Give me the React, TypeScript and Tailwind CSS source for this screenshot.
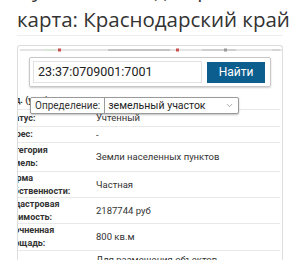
import { ChevronDown } from "lucide-react";

interface Row {
  label: string[];
  value: string;
  h: string;
  top?: boolean;
}

const rows: Row[] = [
  { label: ["Кад. (усл.) номер:"], value: "", h: "h-[17px]" },
  { label: ["Статус:"], value: "Учтенный", h: "h-[17px]" },
  { label: ["Адрес:"], value: "-", h: "h-[16px]" },
  { label: ["Категория", "земель:"], value: "Земли населенных пунктов", h: "h-[29px]" },
  { label: ["Форма", "собственности:"], value: "Частная", h: "h-[26px]" },
  { label: ["Кадастровая", "стоимость:"], value: "2187744 руб", h: "h-[26px]" },
  { label: ["Уточненная", "площадь:"], value: "800 кв.м", h: "h-[27px]" },
  { label: ["Разрешенное", "использование:"], value: "Для размещения объектов", h: "h-[30px]", top: true },
];

function MapStrip() {
  return (
    <svg width="262" height="4" viewBox="0 0 262 4" className="block">
      <rect x="0" y="1" width="262" height="2" fill="#e4e4e4" />
      <rect x="26" y="1" width="10" height="2" fill="#d9e8d6" />
      <rect x="38" y="0.5" width="3" height="3" fill="#c8504f" />
      <rect x="88" y="1" width="62" height="2" fill="#c4c4c4" />
      <rect x="156" y="0.5" width="3" height="3" fill="#c8504f" />
      <rect x="182" y="1" width="34" height="2" fill="#cfcfcf" />
      <rect x="204" y="0.5" width="3" height="3" fill="#9a9a9a" />
      <rect x="252" y="1" width="8" height="2" fill="#d6d6d6" />
    </svg>
  );
}

export default function App() {
  return (
    <div className="w-[300px] h-[260px] overflow-hidden bg-white text-[#333] font-['Roboto',sans-serif]">
      <div className="px-[17px]">
        <h1 className="-mt-[26px] font-['Open_Sans',sans-serif] text-[20.5px] leading-[30px] text-[#333] whitespace-nowrap">
          Публичная кадастровая
          <br />
          карта: Краснодарский край
        </h1>
        <div className="mt-[1px] border-t border-[#eeeeee]" />

        <div className="relative mt-[9px] rounded-t-[3px] border border-b-0 border-[#dddddd] overflow-hidden">
          <div className="px-[2px] pt-[2px]">
            <MapStrip />
          </div>

          <div className="mx-[11px] mt-[5px] flex items-center gap-[5px] rounded-[2px] border border-[#c8c8c8] p-[3px] shadow-[0_1px_2px_rgba(0,0,0,0.2)]">
            <div className="flex h-[22px] w-[169px] items-center border border-[#e2e2e2] pl-[4px] text-[12.5px] text-[#222]">
              23:37:0709001:7001
            </div>
            <button className="flex h-[21px] w-[58px] items-center justify-center bg-[#0b5e8e] text-[12px] text-white">
              Найти
            </button>
          </div>

          <div className="-ml-[14px] mr-[2px] mt-[5px]">
            {rows.map((row, i) => (
              <div
                key={i}
                className={`flex ${row.top ? "items-start" : "items-center"} ${row.h} ${i > 0 ? "border-t border-[#e8e8e8]" : ""}`}
              >
                <div className={`w-[92px] shrink-0 text-[9px] font-bold leading-[13px] text-[#333] ${row.top ? "pt-[6px]" : ""}`}>
                  {row.label.map((l, j) => (
                    <div key={j} className="whitespace-nowrap">{l}</div>
                  ))}
                </div>
                <div className={`text-[9.5px] leading-[14px] text-[#333] whitespace-nowrap ${row.top ? "pt-[2px]" : ""}`}>
                  {row.value}
                </div>
              </div>
            ))}
          </div>

          <div className="absolute left-[12px] top-[51px] flex h-[17px] items-center rounded-[2px] border border-[#9a9a9a] bg-white shadow-[0_1px_2px_rgba(0,0,0,0.25)]">
            <span className="px-[4px] text-[10px] leading-[15px] text-[#333]">Определение:</span>
            <div className="flex h-full w-[134px] items-center justify-between border-l border-[#9a9a9a] pl-[3px] pr-[4px]">
              <span className="text-[10.5px] leading-[15px] text-[#222]">земельный участок</span>
              <ChevronDown size={9} strokeWidth={1.5} className="text-[#666]" />
            </div>
          </div>
        </div>
      </div>
    </div>
  );
}
